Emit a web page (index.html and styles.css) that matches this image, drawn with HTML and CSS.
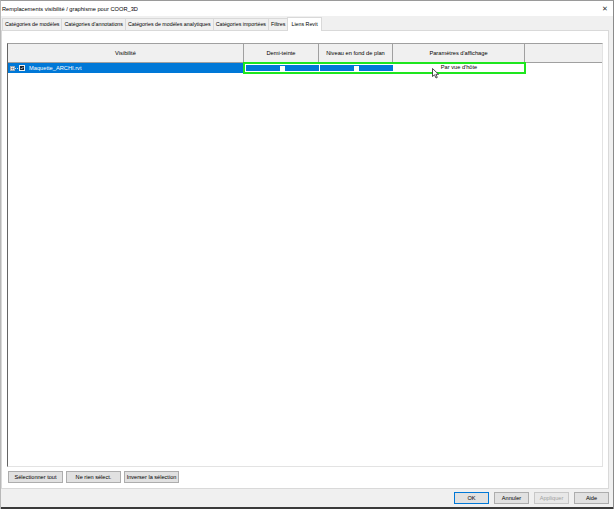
FILE: index.html
```html
<!DOCTYPE html>
<html lang="fr">
<head>
    <meta charset="UTF-8">
    <title>Remplacements visibilité / graphisme pour COOR_3D</title>
    <link rel="stylesheet" href="styles.css">
</head>
<body>
    <div class="window">
        <div class="titlebar">
            <span>Remplacements visibilité / graphisme pour COOR_3D</span>
            <span class="close">&#x2715;</span>
        </div>

        <div class="tabs">
            <div class="tab">Catégories de modèles</div>
            <div class="tab">Catégories d'annotations</div>
            <div class="tab">Catégories de modèles analytiques</div>
            <div class="tab">Catégories importées</div>
            <div class="tab">Filtres</div>
            <div class="tab active">Liens Revit</div>
        </div>

        <div class="panel">
            <div class="grid">
                <div class="grid-head">
                    <div class="col col-vis">Visibilité</div>
                    <div class="col col-demi">Demi-teinte</div>
                    <div class="col col-niv">Niveau en fond de plan</div>
                    <div class="col col-par">Paramètres d'affichage</div>
                    <div class="col col-rest"></div>
                </div>
                <div class="grid-row">
                    <div class="cell-vis">
                        <span class="expander">+</span>
                        <span class="dots"></span>
                        <span class="check">
                            <svg width="6" height="6" viewBox="0 0 6 6"><path d="M1 3 L2.5 4.5 L5 1.5" fill="none" stroke="#fff" stroke-width="1"/></svg>
                        </span>
                        <span class="name">Maquette_ARCHI.rvt</span>
                    </div>
                    <div class="highlight">
                        <div class="cell-bar bar-demi"><span class="box"></span></div>
                        <div class="cell-bar bar-niv"><span class="box"></span></div>
                        <div class="cell-par">Par vue d'hôte</div>
                    </div>
                </div>
                <svg class="cursor" width="8" height="11" viewBox="0 0 8 11">
                    <path d="M0.5 0.5 L0.5 8.5 L2.5 6.8 L4 10 L5.3 9.4 L3.9 6.3 L6.6 6.3 Z" fill="#fff" stroke="#222" stroke-width="0.8" stroke-linejoin="round"/>
                </svg>
            </div>

            <div class="select-buttons">
                <button type="button" class="btn">Sélectionner tout</button>
                <button type="button" class="btn">Ne rien sélect.</button>
                <button type="button" class="btn">Inverser la sélection</button>
            </div>
        </div>

        <div class="dialog-buttons">
            <button type="button" class="btn btn-ok">OK</button>
            <button type="button" class="btn">Annuler</button>
            <button type="button" class="btn btn-off">Appliquer</button>
            <button type="button" class="btn">Aide</button>
        </div>

        <div class="taskbar"></div>
    </div>
</body>
</html>
```

FILE: styles.css
```css
* {
    box-sizing: border-box;
    margin: 0;
    padding: 0;
}

body {
    font-family: "Liberation Sans", Arial, sans-serif;
    font-size: 5.7px;
    color: #000;
    background: #f0f0f0;
}

.window {
    width: 614px;
    height: 509px;
    display: flex;
    flex-direction: column;
    border-top: 1px solid #9a9a9a;
    border-left: 1px solid #b8b8b8;
    border-right: 1px solid #8a8a8a;
    background: #f0f0f0;
    overflow: hidden;
}

.titlebar {
    height: 15px;
    flex-shrink: 0;
    background: #fff;
    display: flex;
    align-items: center;
    justify-content: space-between;
    padding: 0 5px 0 1px;
}

.close {
    font-size: 7px;
    color: #333;
}

.tabs {
    height: 14px;
    flex-shrink: 0;
    display: flex;
    align-items: flex-end;
    padding-left: 1px;
    font-size: 5.3px;
}

.tab {
    height: 12px;
    line-height: 11px;
    padding: 0 2px;
    border: 1px solid #d9d9d9;
    border-bottom: none;
    margin-right: -1px;
    background: #f0f0f0;
}

.tab.active {
    height: 14px;
    line-height: 13px;
    background: #fff;
    position: relative;
    z-index: 1;
    margin-bottom: -1px;
    padding: 0 3px;
}

.panel {
    height: 459px;
    flex-shrink: 0;
    margin-right: 4px;
    background: #fff;
    border: 1px solid #d9d9d9;
    padding: 12px 0 0 5px;
}

.grid {
    position: relative;
    width: 596px;
    height: 424px;
    border-top: 1px solid #a0a0a0;
    border-left: 1px solid #646464;
    border-right: 1px solid #e3e3e3;
    border-bottom: 1px solid #e3e3e3;
    background: #fff;
}

.grid-head {
    display: flex;
    height: 19px;
    background: #f0f0f0;
    border-bottom: 1px solid #a0a0a0;
}

.col {
    display: flex;
    align-items: center;
    justify-content: center;
    border-right: 1px solid #a0a0a0;
}

.col-vis { width: 236px; }
.col-demi { width: 75px; }
.col-niv { width: 74px; }
.col-par { width: 132px; }
.col-rest { flex: 1; border-right: none; background: #f0f0f0; }

.grid-row {
    display: flex;
    height: 11px;
    margin-top: -1px;
}

.cell-vis {
    width: 235px;
    height: 10px;
    margin-top: 1px;
    background: #0078d7;
    display: flex;
    align-items: center;
    padding-left: 2px;
    color: #fff;
}

.expander {
    width: 5px;
    height: 5px;
    border: 1px solid #9ab;
    background: #f4f4f4;
    color: #555;
    font-size: 5px;
    line-height: 3px;
    text-align: center;
}

.dots {
    width: 3px;
    border-top: 1px dotted #cfd8e0;
}

.check {
    width: 6px;
    height: 6px;
    background: #1b2733;
    border: 1px solid #eee;
    display: flex;
    align-items: center;
    justify-content: center;
    margin-left: 1px;
}

.name {
    margin-left: 4px;
}

.highlight {
    width: 283px;
    height: 12px;
    border: 2px solid #1ee61e;
    display: flex;
    align-items: center;
    padding: 0 0 0 1px;
}

.cell-bar {
    height: 6px;
    background: #0078d7;
    display: flex;
    align-items: center;
    justify-content: center;
    margin-right: 1px;
}

.bar-demi { width: 73px; }
.bar-niv { width: 73px; }

.box {
    width: 5px;
    height: 5px;
    background: #fff;
}

.cell-par {
    flex: 1;
    text-align: center;
    line-height: 6px;
    align-self: flex-start;
}

.cursor {
    position: absolute;
    left: 424px;
    top: 24px;
}

.select-buttons {
    display: flex;
    gap: 3px;
    margin-top: 4px;
    margin-left: 1px;
}

.btn {
    height: 12px;
    width: 55px;
    font-family: inherit;
    font-size: 5.6px;
    color: #000;
    background: #e1e1e1;
    border: 1px solid #adadad;
}

.dialog-buttons {
    display: flex;
    justify-content: flex-end;
    gap: 5px;
    padding-right: 4px;
    margin-top: 3px;
}

.dialog-buttons .btn {
    width: 35px;
}

.dialog-buttons .btn-ok {
    border-color: #0078d7;
}

.dialog-buttons .btn-off {
    color: #a0a0a0;
    background: #e8e8e8;
    border-color: #c8c8c8;
}

.taskbar {
    margin-top: auto;
    height: 2px;
    background: #3a3a3a;
}
```
